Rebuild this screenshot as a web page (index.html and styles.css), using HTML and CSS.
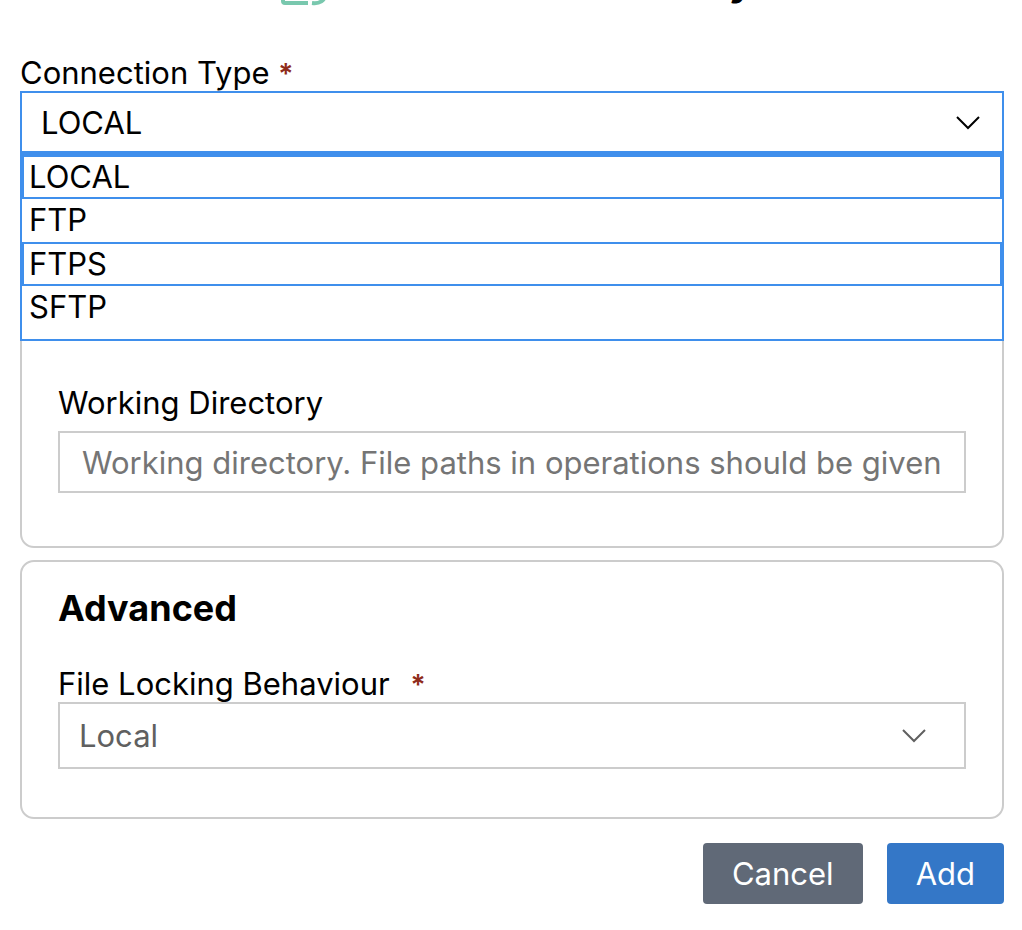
FILE: index.html
```html
<!DOCTYPE html>
<html lang="en">
<head>
<meta charset="utf-8">
<meta name="viewport" content="width=device-width, initial-scale=1">
<title>Connection</title>
<link rel="stylesheet" href="styles.css">
</head>
<body>
<form class="dialog">
  <header class="dialog-header">
    <svg class="dialog-icon" viewBox="0 0 48 48" aria-hidden="true">
      <path d="M27 44H4Q2 44 2 42V10h14l4 6h22v10"/>
      <path d="M31 44c8 1 12-2 15-10"/>
    </svg>
    <span class="dialog-title">y</span>
  </header>

  <div class="field">
    <label class="label" for="type">Connection Type <span class="required">*</span></label>
    <div class="picker picker-open">
      <select class="select" id="type">
        <option>LOCAL</option><option>FTP</option><option>FTPS</option><option>SFTP</option>
      </select>
      <svg class="chevron" viewBox="0 0 26 14" aria-hidden="true"><path d="M2 1l11 11L24 1"/></svg>
      <ul class="menu" role="listbox" aria-label="Connection Type">
        <li class="option outlined" role="option" aria-selected="true">LOCAL</li>
        <li class="option" role="option">FTP</li>
        <li class="option outlined" role="option">FTPS</li>
        <li class="option" role="option">SFTP</li>
      </ul>
    </div>
  </div>

  <section class="card card-basic">
    <label class="label label-spaced" for="directory">Working Directory</label>
    <input class="input" id="directory" type="text" placeholder="Working directory. File paths in operations should be given with respect to this path">
  </section>

  <section class="card card-advanced">
    <h2 class="card-title">Advanced</h2>
    <label class="label" for="locking">File Locking Behaviour <span class="required required-spaced">*</span></label>
    <div class="picker picker-muted">
      <select class="select" id="locking"><option>Local</option></select>
      <svg class="chevron" viewBox="0 0 26 14" aria-hidden="true"><path d="M2 1l11 11L24 1"/></svg>
    </div>
  </section>

  <footer class="actions">
    <button class="button" type="button">Cancel</button>
    <button class="button button-primary" type="submit">Add</button>
  </footer>
</form>
</body>
</html>
```
FILE: styles.css
```css
* { box-sizing: border-box; }

body {
  margin: 0;
  background: #fff;
  color: #000;
  font: 31px/36px Inter, "Liberation Sans", sans-serif;
}

.dialog { padding: 0 18px 24px 20px; }

.dialog-header {
  display: flex;
  justify-content: center;
  align-items: flex-end;
  gap: 400px;
  height: 7px;
  margin-bottom: 48px;
  padding-left: 10px;
  overflow: hidden;
}

.dialog-icon {
  flex: none;
  width: 48px;
  height: 48px;
  fill: none;
  stroke: #79c8ae;
  stroke-width: 4;
}

.dialog-title {
  font-size: 40px;
  font-weight: 700;
  line-height: 52px;
}

.label { display: block; }
.label-spaced { margin-bottom: 10px; }

.required {
  color: #8f2c1a;
  font-size: 28px;
  font-weight: 600;
  line-height: 28px;
}

.required-spaced { margin-left: 12px; }

.picker {
  display: grid;
  position: relative;
  align-items: center;
}

.select {
  grid-area: 1 / 1;
  width: 100%;
  height: 67px;
  padding: 1px 60px 0 19px;
  border: 2px solid #ccc;
  border-radius: 0;
  background: #fff;
  color: inherit;
  font: inherit;
  appearance: none;
}

.chevron {
  grid-area: 1 / 1;
  justify-self: end;
  width: 26px;
  height: 14px;
  margin-right: 39px;
  fill: none;
  stroke: currentColor;
  stroke-width: 2;
  pointer-events: none;
}

.picker-muted { color: #606060; }

.picker-open .select {
  height: 62px;
  border-color: #3f8fec;
}

.picker-open .chevron {
  margin-top: 2px;
  margin-right: 23px;
}

.menu {
  position: absolute;
  z-index: 1;
  top: 100%;
  left: 0;
  right: 0;
  margin: 0;
  padding: 0 0 10px;
  border: 2px solid #3f8fec;
  background: #fff;
  list-style: none;
}

.option {
  padding: 1px 7px 2px;
  line-height: 40px;
}

.outlined {
  padding: 0 5px;
  border: 2px solid #3f8fec;
}

.card {
  padding: 24px 36px 48px;
  border: 2px solid #ccc;
  border-radius: 14px;
}

.card-basic {
  margin: 12px 0;
  padding: 218px 36px 53px;
}

.input {
  display: block;
  width: 100%;
  height: 62px;
  padding: 0 22px;
  border: 2px solid #ccc;
  border-radius: 0;
  font: inherit;
}

.input::placeholder { color: #757575; }

.card-title {
  margin: 0 0 36px;
  font-size: 36px;
  line-height: 44px;
}

.actions {
  display: flex;
  justify-content: flex-end;
  gap: 24px;
  margin-top: 24px;
}

.button {
  height: 61px;
  padding: 0 29px;
  border: 0;
  border-radius: 4px;
  background: #606977;
  color: #fff;
  font: inherit;
}

.button-primary { background: #3477c7; }
```
